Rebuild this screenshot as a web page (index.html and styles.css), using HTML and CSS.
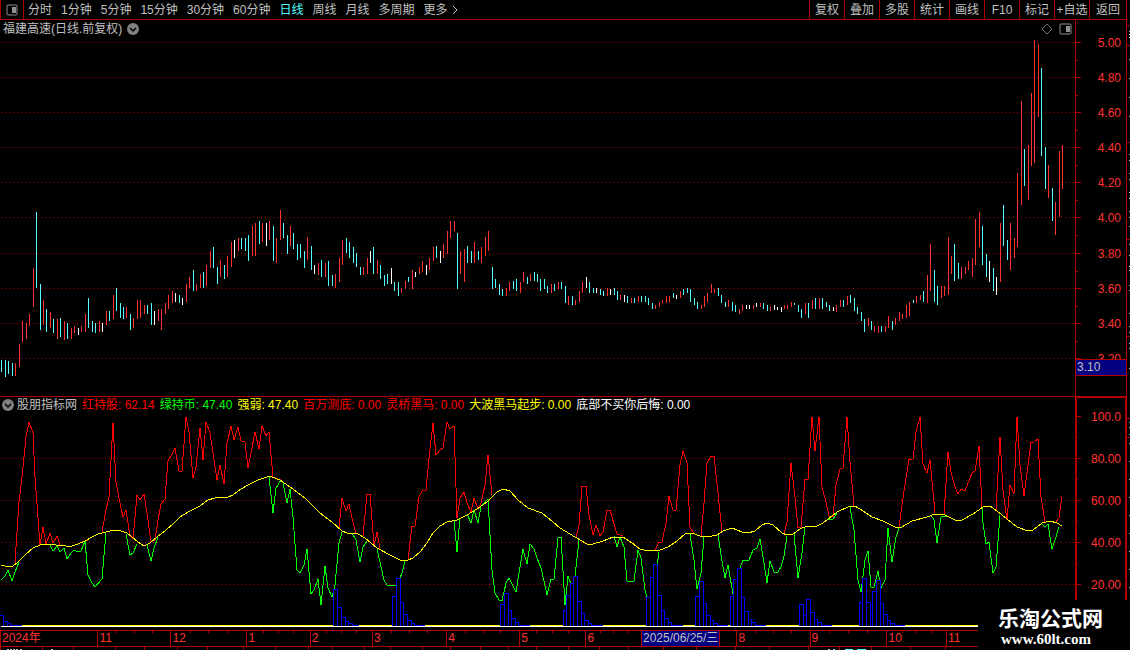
FILE: index.html
```html
<!DOCTYPE html>
<html lang="zh-CN">
<head>
<meta charset="utf-8">
<title>福建高速 日线</title>
<link rel="stylesheet" href="styles.css">
</head>
<body>
<div class="terminal">
  <header class="toolbar">
    <button class="layout-btn" aria-label="布局">
      <svg width="12" height="12" viewBox="0 0 12 12"><rect x="1" y="1" width="10" height="10" rx="1" fill="none" stroke="#909090"/><rect x="6" y="3" width="4" height="6" fill="#909090"/></svg>
    </button>
    <nav class="periods">
      <button>分时</button><button>1分钟</button><button>5分钟</button><button>15分钟</button><button>30分钟</button><button>60分钟</button><button class="active">日线</button><button>周线</button><button>月线</button><button>多周期</button><button class="more">更多<svg width="6" height="10" viewBox="0 0 6 10"><path d="M1 1L5 5L1 9" fill="none" stroke="#c0c0c0"/></svg></button>
    </nav>
    <div class="tools">
      <button>复权</button><button>叠加</button><button>多股</button><button>统计</button><button>画线</button><button>F10</button><button>标记</button><button>+自选</button><button>返回</button>
    </div>
  </header>

  <section class="panel price">
    <div class="plot">
      <div class="title">
        <h1>福建高速(日线.前复权)</h1>
        <button aria-label="展开"><svg width="12" height="12" viewBox="0 0 12 12"><circle cx="6" cy="6" r="6" fill="#808080"/><path d="M3 5L6 8L9 5" fill="none" stroke="#000" stroke-width="1.5"/></svg></button>
        <span class="corner">
          <svg width="12" height="12" viewBox="0 0 12 12"><path d="M6 1L11 6L6 11L1 6Z" fill="none" stroke="#707070"/></svg>
          <svg width="13" height="12" viewBox="0 0 13 12"><rect x="1" y="1" width="11" height="10" rx="1" fill="none" stroke="#909090"/><rect x="7" y="3" width="4" height="6" fill="#909090"/></svg>
        </span>
      </div>
      <svg id="price" class="chart price-chart" viewBox="0 38 1075 358" preserveAspectRatio="none"></svg>
    </div>
    <svg id="price-axis" class="axis price-axis" viewBox="1075 20 51 376"></svg>
  </section>

  <section class="panel indicator">
    <div class="plot">
      <div class="legend">
        <button aria-label="指标"><svg width="12" height="12" viewBox="0 0 12 12"><circle cx="6" cy="6" r="6" fill="#808080"/><path d="M3 5L6 8L9 5" fill="none" stroke="#000" stroke-width="1.5"/></svg></button>
        <span class="name">股朋指标网</span>
        <span class="red">红持股: 62.14</span>
        <span class="green">绿持币: 47.40</span>
        <span class="yellow">强弱: 47.40</span>
        <span class="red">百万测底: 0.00</span>
        <span class="red">灵桥黑马: 0.00</span>
        <span class="yellow">大波黑马起步: 0.00</span>
        <span class="white">底部不买你后悔: 0.00</span>
      </div>
      <svg id="indicator" class="chart indicator-chart" viewBox="0 413 1075 217" preserveAspectRatio="none"></svg>
    </div>
    <svg id="indicator-axis" class="axis indicator-axis" viewBox="1075 397 51 233"></svg>
  </section>

  <div class="dates" id="dates"></div>
  <svg id="ruler" class="ruler" viewBox="0 647 1126 3" preserveAspectRatio="none"></svg>
  <aside class="brand"><strong>乐淘公式网</strong><span>www.60lt.com</span></aside>
</div>
<svg id="strip" class="strip" viewBox="1126 0 4 650" preserveAspectRatio="none"></svg>
<script src="chart.js"></script>
</body>
</html>
```
FILE: styles.css
```css
* { box-sizing: border-box; }
body {
  margin: 0;
  min-height: 100vh;
  display: flex;
  background: #000;
  color: #c0c0c0;
  font: 12px/16px "Liberation Sans", "Noto Sans CJK SC", sans-serif;
}
button {
  margin: 0;
  padding: 0;
  border: 0;
  background: none;
  color: inherit;
  font: inherit;
  white-space: nowrap;
}
svg { display: block; shape-rendering: crispEdges; }
button svg, .corner svg { shape-rendering: auto; }
.terminal { position: relative; flex: 1; min-width: 0; }
.strip { width: 4px; height: 650px; }

.toolbar {
  display: flex;
  height: 20px;
  border-bottom: 1px solid #b00000;
}
.layout-btn {
  display: flex;
  align-items: center;
  justify-content: center;
  width: 24px;
  border: solid #b00000;
  border-width: 0 1px;
}
.periods { display: flex; flex: 1; gap: 9px; padding-left: 4px; }
.periods .active { color: #54ffff; }
.more { display: flex; align-items: center; gap: 4px; }
.tools { display: flex; }
.tools button { width: 35px; border-left: 1px solid #b00000; }
.tools button:last-child { width: 37px; }

.panel { display: flex; }
.plot { flex: 1; min-width: 0; }
.chart { width: 100%; }
.axis { width: 51px; }
.axis text { font-size: 12px; fill: #ff3232; text-anchor: end; }
.axis .cursor { fill: #c0c0c0; text-anchor: start; }
.price-chart { height: 358px; }
.price-axis { height: 376px; }
.indicator-chart { height: 217px; }
.indicator-axis { height: 233px; }
.title {
  display: flex;
  align-items: center;
  gap: 5px;
  height: 18px;
  padding: 0 3px;
}
.title h1 { margin: 0; font-size: 12px; font-weight: 400; }
.corner { display: flex; gap: 6px; margin-left: auto; }

.indicator { border-top: 1px solid #b00000; }
.legend {
  display: flex;
  align-items: center;
  gap: 5px;
  height: 16px;
  padding-left: 2px;
  white-space: nowrap;
}
.legend .name { margin-left: -2px; }
.red { color: #f00; }
.green { color: #0f0; }
.yellow { color: #ff0; }
.white { color: #fff; }

.dates {
  display: flex;
  height: 17px;
  border: solid #b00000;
  border-width: 1px 0;
  color: #ff3232;
  line-height: 15px;
}
.dates span {
  flex-basis: 0;
  padding-left: 1px;
  border-left: 1px solid #b00000;
  white-space: nowrap;
  overflow: hidden;
}
.dates .month {
  background:
    linear-gradient(#b00000, #b00000) 25% 0 / 1px 2px no-repeat,
    linear-gradient(#b00000, #b00000) 50% 0 / 1px 2px no-repeat,
    linear-gradient(#b00000, #b00000) 75% 0 / 1px 2px no-repeat;
}
.dates .current { background: #000080; color: #c0c0c0; }
.ruler { width: 100%; height: 3px; }

.brand {
  position: absolute;
  right: -4px;
  bottom: 0;
  width: 152px;
  height: 50px;
  padding: 7px 0 0 20px;
  background: #000;
  color: #fff;
}
.brand strong { display: block; font-size: 21px; line-height: 24px; }
.brand span {
  display: block;
  padding-left: 3px;
  font: bold 15px/16px "Liberation Serif", serif;
}
```
FILE: chart.js
```js
const NS = "http://www.w3.org/2000/svg";
const RED = "#ff3232", CYAN = "#54ffff", LINE = "#b00000";
function add(svg, tag, attrs, text) {
  const el = document.createElementNS(NS, tag);
  for (const k in attrs) el.setAttribute(k, attrs[k]);
  if (text) el.textContent = text;
  svg.appendChild(el);
}
const box = (svg, x, y, width, height, fill) => add(svg, "rect", { x, y, width, height, fill });
const get = id => document.getElementById(id);

// Each bar: colour letter, x, high, low
const bars = `C1,360,372 C5,360,377 C8,361,374 C12,363,376 R15,363,376 R19,344,367 R22,321,342 R26,323,339 R29,314,326 R33,268,307 C36,212,288 C40,284,330 R43,300,325 C46,309,332 R50,312,328 C53,319,333 R57,319,339 C60,318,337 R64,321,340 C67,323,339 R71,328,339 R74,326,333 W78,328,335 R81,326,332 R85,314,332 C88,298,328 C92,321,332 C95,323,333 R99,321,332 W102,323,332 R106,311,325 C109,311,321 R113,295,319 C116,288,311 C120,303,318 C123,307,319 R126,307,318 C130,314,330 R133,318,328 R137,300,319 R140,300,318 R144,305,314 C147,305,314 C151,303,325 W154,311,325 R158,309,321 R161,309,330 R165,303,314 R168,295,309 R172,291,303 W175,293,302 C179,295,303 W182,298,305 R186,284,302 R189,277,288 C193,270,291 R196,284,291 R200,274,288 C203,272,288 R206,265,286 R210,251,268 C213,247,268 C217,267,284 R220,260,277 C224,265,279 R227,256,277 R231,242,267 W234,240,258 R238,238,251 C241,238,249 C245,238,251 C248,235,261 R252,226,256 R255,223,256 C259,221,244 R262,223,242 W266,223,246 R269,221,240 C273,226,261 R276,238,263 R280,210,240 C283,223,238 C287,235,254 R290,226,246 C293,233,249 C297,244,260 C300,244,258 C304,251,268 R307,237,260 C311,246,270 W314,265,274 R318,263,275 C321,260,277 R325,263,277 C328,261,286 C332,275,286 R335,274,288 R339,258,282 R342,240,265 C346,238,253 C349,242,258 C353,247,263 C356,253,267 C360,267,275 R363,267,275 R367,258,274 W370,251,263 C373,247,274 R377,260,274 C380,265,279 C384,275,286 C387,274,284 W391,268,284 C394,282,291 C398,282,296 R401,288,293 R405,281,289 C408,277,282 R412,270,289 W415,272,277 R419,267,274 R422,261,272 W426,265,275 R429,258,270 R433,247,261 C436,246,258 W440,251,263 R443,244,258 R447,231,254 R450,221,238 R454,221,231 C457,233,289 R460,251,274 R464,249,282 C467,246,263 C471,251,263 R474,242,263 C478,251,260 R481,247,263 R485,237,256 R488,231,251 C492,267,289 C495,279,288 C499,284,295 C502,289,296 R506,288,296 R509,282,291 C513,281,289 C516,279,291 R520,282,293 R523,272,282 C527,277,284 R530,274,281 C534,272,281 C537,274,282 C540,279,291 C544,279,289 C547,286,293 R551,284,293 C554,284,291 R558,282,289 C561,282,289 C565,286,303 R568,296,305 C572,296,305 R575,300,305 R579,291,302 R582,282,293 W586,277,288 C589,282,293 C593,288,293 W596,288,293 C600,289,295 C603,291,296 R607,288,296 W610,289,295 C614,288,295 C617,291,300 R620,295,300 W624,295,302 C627,296,303 R631,298,303 C634,298,303 R638,296,302 C641,296,302 C645,296,302 C648,298,305 C652,303,309 R655,305,309 R659,302,307 R662,300,303 R666,296,303 R669,296,302 C673,293,298 W676,295,299 R680,291,298 C683,289,295 C687,288,293 C690,289,302 C694,298,305 C697,302,309 R701,305,309 R704,296,307 R707,293,302 R711,284,293 R714,289,293 C718,288,296 C721,295,303 C725,302,307 R728,300,307 C732,302,311 C735,305,312 R739,309,314 R742,305,311 W746,305,309 W749,305,309 R753,305,309 W756,303,307 R760,303,307 C763,303,309 C767,305,311 R770,307,311 W774,305,310 W777,307,310 W781,307,312 R784,305,309 R787,305,309 R791,302,307 C794,303,305 C798,305,312 C801,309,318 R805,303,314 C808,303,318 R812,300,309 C815,298,309 R819,298,309 C822,298,309 C826,302,307 C829,305,311 W833,307,311 R836,305,312 R840,300,307 C843,300,307 R847,296,305 C850,295,303 C854,298,311 C857,307,314 C861,312,321 C864,319,332 R868,318,326 C871,321,330 R874,326,332 R878,326,333 C881,326,332 R885,326,332 R888,316,328 C892,321,330 R895,318,325 R899,312,321 R902,314,319 R906,305,318 R909,302,316 C913,300,303 R916,296,303 R920,295,300 C923,291,302 R927,275,303 R930,244,291 C934,270,302 C937,286,305 R941,286,298 R944,286,296 R948,237,295 R951,256,274 C954,244,281 C958,263,279 R961,267,279 R965,267,274 R968,261,270 R972,258,277 R975,219,265 R979,212,247 C982,226,265 C986,254,277 W989,261,282 C993,268,291 W996,277,295 R1000,223,282 C1003,205,246 C1007,240,260 R1010,223,270 R1014,238,258 R1017,173,247 R1021,101,205 C1024,149,186 R1028,145,200 R1031,93,166 R1034,40,163 R1038,44,117 C1041,68,156 C1045,147,189 R1048,165,198 C1052,188,221 R1055,202,235 R1059,151,217 R1062,145,189`;

function gridRow(svg, y) {
  add(svg, "path", { d: `M1 ${y}h1074v1h-1074z`, fill: "url(#dots-" + svg.id + ")" });
}
function dotPattern(svg) {
  add(svg, "pattern", { id: "dots-" + svg.id, x: 1, y: 0, width: 4, height: 1, patternUnits: "userSpaceOnUse" });
  box(svg.lastChild, 0, 0, 1, 1, LINE);
}

// Price chart
const price = get("price");
const priceRows = [42, 77, 112, 147, 182, 217, 253, 288, 323, 358];
dotPattern(price);
priceRows.forEach(y => gridRow(price, y));
const colours = { R: RED, C: CYAN, W: "#fff" };
bars.split(" ").forEach(b => {
  const [x, high, low] = b.slice(1).split(",").map(Number);
  box(price, x, high, 1, low - high, colours[b[0]]);
});

const pa = get("price-axis");
box(pa, 1075, 20, 1, 376, LINE);
priceRows.forEach((y, i) => {
  box(pa, 1076, y, 5, 1, LINE);
  if (i < 9) box(pa, 1076, y + 18, 2, 1, LINE);
  add(pa, "text", { x: 1121, y: y + 5 }, (5 - i * 0.2).toFixed(2));
});
box(pa, 1075, 359, 51, 17, LINE);
box(pa, 1076, 360, 50, 15, "#000080");
add(pa, "text", { x: 1077, y: 371, class: "cursor" }, "3.10");

// Indicator chart
const ind = get("indicator");
dotPattern(ind);
[458, 500, 542, 584].forEach(y => gridRow(ind, y));
const red = [
  "15,563 19,502 22,477 26,437 29,422 33,433 35,477 40,545 43,527 46,544 50,533 53,543 57,536 60,545",
  "82,542 85,541 88,540",
  "102,532 106,510 109,497 113,423 116,482 120,503 123,517 126,510 130,536 133,539 137,495 140,500 144,494 147,513 151,542 155,540 158,520 161,504 165,499 168,461 172,454 175,448 179,471 182,471 186,417 189,432 193,478 196,467 200,428 203,460 206,422 210,433 213,453 217,480 220,465 224,484 227,443 231,426 234,440 238,427 241,441 245,442 248,468 252,448 255,432 259,449 262,426 266,436 269,432 273,477 281,480",
  "339,528 342,498 346,511 349,504 352,518 356,534",
  "363,536 367,494 370,494 374,546 377,532 380,549",
  "403,560 408,560 412,526 415,526 419,497 422,491 426,490 429,458 433,423 436,455 440,450 443,448 447,422 450,429 454,426 457,518 460,498 464,492 467,503 471,512 474,498 478,509 481,503 485,485 488,455 492,495",
  "576,537 579,525 582,486 586,486 589,515 593,535 596,525 600,536 603,532 607,510 610,510 614,524 617,534 623,536",
  "635,545 640,549",
  "655,550 659,542 662,542 666,523 669,496 673,510 676,510 680,465 683,451 687,463 690,527 694,534",
  "701,536 704,503 707,463 711,456 714,456 718,493 722,532",
  "784,534 787,522 791,463 795,497 798,528 801,527 805,479 808,479 812,417 815,451 819,417 822,487 826,502 829,516 833,517 836,485 840,469 843,468 847,417 850,462 854,506",
  "899,527 903,498 909,459 913,459 916,432 920,417 923,464 927,473 930,460 935,513",
  "944,514 948,452 951,472 955,487 958,494 961,489 965,491 972,473 975,471 979,446 982,507",
  "996,510 1000,437 1003,490 1007,520 1010,485 1014,494 1017,417 1020,465 1024,496 1031,442 1034,442 1038,439 1041,497 1045,522",
  "1056,522 1059,518 1062,496"
];
const green = [
  "1,580 5,576 8,570 12,581 15,572 19,562",
  "50,545 53,551 57,546 60,552 64,548 67,559 71,553 74,550 78,552 81,551 85,541 88,575 92,583 95,587 102,579 106,532",
  "126,534 130,555 133,553 137,544", "147,545 151,561 154,548 158,537",
  "269,477 273,513 276,488 281,480 283,483 287,503 290,489 293,517 297,570 300,573 304,565 307,549 311,594 314,590 318,579 321,605 325,566 328,588 332,597 335,585 339,543 342,532",
  "352,533 356,540 360,562 363,547 367,541",
  "377,549 380,562 384,580 387,585 395,586 398,583 402,573 405,561",
  "454,520 457,552 460,518",
  "467,514 471,523 474,510 478,523 481,506 488,499 492,570 495,593 499,600 502,601 506,583 509,578 516,592 519,573 523,549 527,564 530,544 534,549 537,558 541,568 544,581 547,595 551,579 554,579 558,538 561,537 565,605 568,576 572,587 575,576 579,540",
  "614,536 617,547 620,537 624,547 627,581 634,581 638,550 641,558 645,590 647,597", "656,572 659,552",
  "690,534 694,560 697,589 701,573 704,537",
  "718,534 721,555 725,578 728,565 733,594 736,583 740,568 743,560 749,560 753,550 757,548 760,539 764,563 767,583 770,561 774,572 778,572 781,567 784,556 787,536",
  "794,534 798,578 802,553 805,527", "827,519 833,519 837,513",
  "850,507 854,530 858,580 861,592 865,560 868,551 871,587 874,587 878,571 881,588 885,580 888,528 892,562 896,537 899,528",
  "931,515 934,520 937,543 941,517 947,516",
  "982,508 983,523 986,544 989,542 993,573 996,567 1000,515",
  "1041,523 1045,527 1048,524 1052,549 1055,540 1059,527"
];
const yellow = "1,565 5,566 9,567 13,566 18,562 25,555 33,548 40,545 48,544 56,545 66,546 72,546 78,544 85,541 92,537 98,534 106,532 114,530 121,531 127,533 132,537 138,542 144,546 150,543 157,537 166,530 173,524 180,517 190,511 200,506 208,500 215,498 228,497 233,495 241,489 250,484 258,480 264,478 270,476 277,479 280,480 290,487 305,498 320,513 332,522 342,531 347,533 358,534 365,538 377,548 390,555 400,560 408,560 413,558 420,552 427,543 433,533 440,526 447,522 457,520 467,515 477,509 487,502 497,492 503,489 510,491 518,500 528,508 542,513 553,522 560,528 575,537 587,544 593,544 603,541 613,537 623,537 632,543 640,549 648,551 660,550 668,547 677,541 685,534 692,533 700,536 708,537 717,535 723,531 732,528 742,532 748,533 755,531 762,525 767,523 773,525 782,533 787,535 793,534 800,529 807,526 817,526 823,523 837,512 850,506 855,506 863,511 872,517 883,521 895,527 902,527 912,521 927,517 935,514 943,514 955,520 962,520 973,514 983,507 990,506 997,511 1007,519 1017,527 1028,531 1033,530 1042,523 1050,521 1057,523 1062,526";
const line = (points, stroke) => add(ind, "polyline", { points, stroke, fill: "none", "vector-effect": "non-scaling-stroke" });
green.forEach(p => line(p, "#0f0"));
red.forEach(p => line(p, "#f00"));
line(yellow, "#ff0");

// Histogram groups: left edge, right edge, top of each column; last number is where the tail ends
box(ind, 1, 625, 1074, 1, "#ff0");
const blue = "#0000ff";
[
  ["-1,3,615 3,7,621 7,10,623", 22],
  ["333,337,589 337,341,607 341,345,617 345,348,621 348,352,623", 359],
  ["392,396,596 396,400,578 400,403,602 403,407,614 407,411,620 411,414,623", 425],
  ["500,504,604 504,508,593 508,511,610 511,515,618 515,518,622", 530],
  ["563,566,610 566,570,595 570,573,583 573,577,576 577,581,601 581,584,613 584,588,620 588,591,623", 603],
  ["646,650,597 650,653,577 653,657,564 657,661,595 661,664,610 664,668,618 668,671,622", 683],
  ["695,699,596 699,703,581 703,706,603 706,710,615 710,713,620 713,717,623", 728],
  ["730,733,596 733,737,579 737,741,568 741,744,597 744,748,611 748,751,619 751,755,622", 766],
  ["799,803,604 803,806,615 806,810,599 810,814,612 814,817,619 817,821,622", 832],
  ["859,862,602 862,866,578 866,870,602 870,872,614 872,876,591 876,880,580 880,883,603 883,887,614 887,890,620 890,894,623", 905]
].forEach(([cols, end]) => {
  let last = 0;
  cols.split(" ").forEach(c => {
    const [l, r, t] = c.split(",").map(Number);
    box(ind, l, t, r - l + 1, 626 - t, blue);
    box(ind, l + 1, t + 1, r - l - 1, 625 - t, "#000");
    last = r;
  });
  box(ind, last, 625, end - last, 1, blue);
});
box(ind, 1, 626, 1074, 1, "#fff");

const ia = get("indicator-axis");
box(ia, 1075, 397, 51, 1, LINE);
box(ia, 1075, 397, 2, 233, LINE);
box(ia, 1125, 397, 1, 233, LINE);
["100.0", "80.00", "60.00", "40.00", "20.00"].forEach((t, i) => {
  const y = 416 + i * 42;
  box(ia, 1077, y, 4, 1, LINE);
  box(ia, 1077, y + 21, 1, 1, LINE);
  add(ia, "text", { x: 1121, y: y + 5 }, t);
});

// Date axis: label, width share, kind
[["2024年", 98, ""], ["11", 73, "month"], ["12", 76, "month"], ["1", 63, "month"], ["2", 62, "month"], ["3", 74, "month"], ["4", 73, "month"], ["5", 66, "month"], ["6", 55, "month"], ["2025/06/25/三", 78, "current"], ["", 16, ""], ["8", 73, "month"], ["9", 77, "month"], ["10", 59, "month"], ["11", 183, ""]].forEach(([label, share, kind]) => {
  const s = document.createElement("span");
  s.textContent = label;
  s.className = kind;
  s.style.flexGrow = share;
  get("dates").appendChild(s);
});

const ruler = get("ruler");
[0, 42, 73, 115, 144, 177, 207, 243, 275, 308, 332, 364, 390, 422, 450, 480, 508, 536, 568, 599, 628, 663, 696, 735, 769, 808, 839, 871, 910, 945].forEach(x => box(ruler, x, 647, 1, 3, LINE));
[7, 10, 13, 16, 20, 51, 828, 833].forEach(x => box(ruler, x, 649, 2, 1, "#c0c0c0"));
box(ruler, 845, 649, 8, 1, CYAN);
box(ruler, 857, 649, 9, 1, CYAN);

// Right edge strip
const strip = get("strip");
box(strip, 1126, 0, 1, 600, LINE);
[25, 45, 142, 239, 336, 418, 437].forEach(y => box(strip, 1127, y, 3, 1, LINE));
[31, 34, 37, 59, 78, 97, 116, 154, 160, 173, 179, 192, 198, 211, 217, 226, 244, 255, 266, 270, 285, 290, 313, 326, 332, 343, 348, 368, 422, 427, 434, 443, 461, 479, 497, 515, 533, 551, 569, 587].forEach(y => box(strip, 1129, y, 1, 1, "#c0c0c0"));
```
